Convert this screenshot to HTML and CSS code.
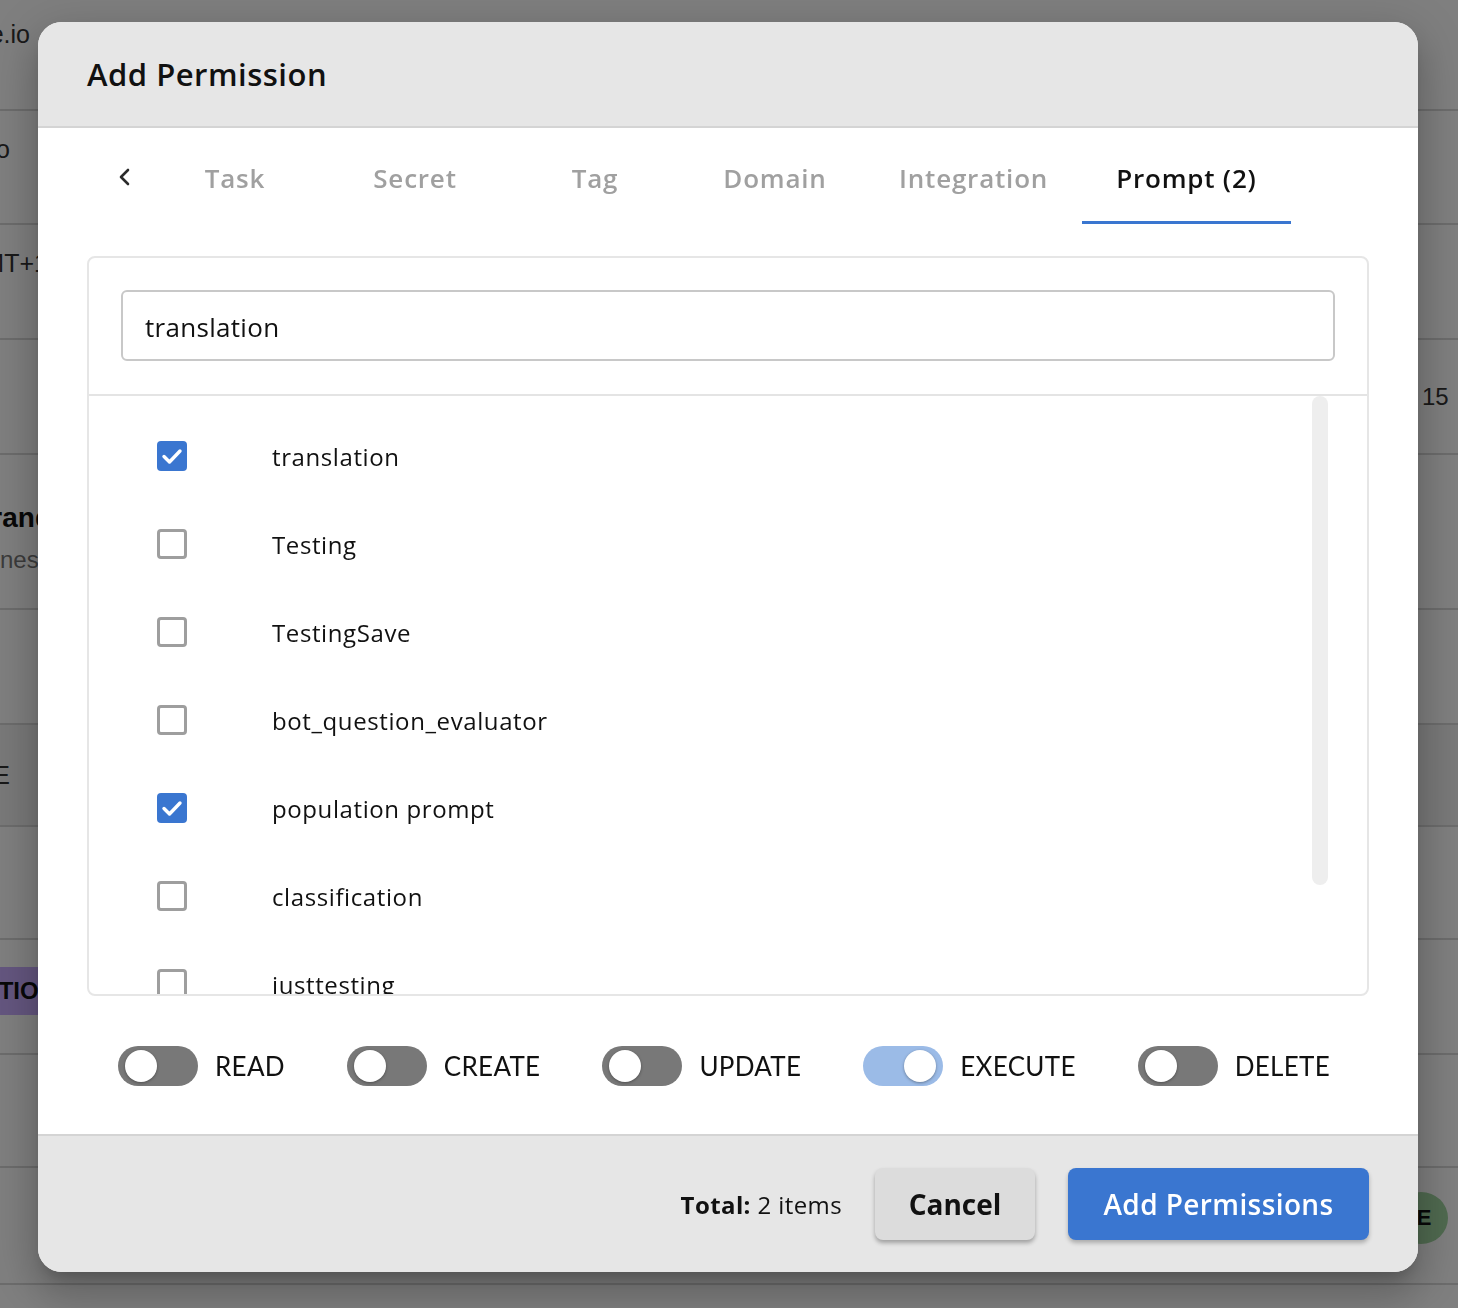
FILE: index.html
```html
<!DOCTYPE html>
<html lang="en">
<head>
<meta charset="utf-8">
<title>Add Permission</title>
<link rel="stylesheet" href="styles.css">
</head>
<body>
<div class="bg-page">
  <div class="bg-row r1"><div class="bg-left"><span class="bg-text">workspace.io</span></div></div>
  <div class="bg-row r2"><div class="bg-left narrow"><span class="bg-text">no</span></div></div>
  <div class="bg-row r3"><div class="bg-left wide"><span class="bg-text">GMT+11</span></div></div>
  <div class="bg-row r4"><div class="bg-right"><span class="bg-num">15</span></div></div>
  <div class="bg-row r5"><div class="bg-left wide2"><div class="bg-stack"><span class="bg-strong">Brand</span><span class="bg-muted">Chinese</span></div></div></div>
  <div class="bg-row r6"></div>
  <div class="bg-row r7 band"><div class="bg-left narrow"><span class="bg-text">TE</span></div></div>
  <div class="bg-row r8"></div>
  <div class="bg-row r9"><div class="bg-left wide"><span class="bg-chip">ACTION</span></div></div>
  <div class="bg-row r10"></div>
  <div class="bg-row r11"><div class="bg-right avatar-cell"><span class="bg-avatar">E</span></div></div>
  <div class="bg-row r12"></div>
</div>
<div class="overlay"></div>

<div class="modal">
  <div class="modal-header">
    <h2 class="modal-title">Add Permission</h2>
  </div>

  <div class="tabs">
    <button class="tab-back" aria-label="Back">
      <svg width="16" height="20" viewBox="0 0 16 20"><path d="M11 3 L4 10 L11 17" fill="none" stroke="#2b2b2b" stroke-width="2.6" stroke-linecap="round" stroke-linejoin="round"/></svg>
    </button>
    <div class="tab">Task</div>
    <div class="tab">Secret</div>
    <div class="tab">Tag</div>
    <div class="tab">Domain</div>
    <div class="tab">Integration</div>
    <div class="tab active">Prompt (2)</div>
  </div>

  <div class="modal-body">
    <div class="card">
      <div class="search-wrap">
        <div class="search-input">translation</div>
      </div>
      <div class="list">
        <div class="row"><span class="cb checked"><svg viewBox="0 0 30 30" width="30" height="30"><path d="M7 15.5 L12.5 21 L23 10" fill="none" stroke="#fff" stroke-width="3.4" stroke-linecap="round" stroke-linejoin="round"/></svg></span><span class="label">translation</span></div>
        <div class="row"><span class="cb"></span><span class="label">Testing</span></div>
        <div class="row"><span class="cb"></span><span class="label">TestingSave</span></div>
        <div class="row"><span class="cb"></span><span class="label">bot_question_evaluator</span></div>
        <div class="row"><span class="cb checked"><svg viewBox="0 0 30 30" width="30" height="30"><path d="M7 15.5 L12.5 21 L23 10" fill="none" stroke="#fff" stroke-width="3.4" stroke-linecap="round" stroke-linejoin="round"/></svg></span><span class="label">population prompt</span></div>
        <div class="row"><span class="cb"></span><span class="label">classification</span></div>
        <div class="row"><span class="cb"></span><span class="label">justtesting</span></div>
        <div class="scroll-thumb"></div>
      </div>
    </div>

    <div class="toggles">
      <div class="toggle-item"><span class="switch"><span class="knob"></span></span><span class="toggle-label">READ</span></div>
      <div class="toggle-item"><span class="switch"><span class="knob"></span></span><span class="toggle-label">CREATE</span></div>
      <div class="toggle-item"><span class="switch"><span class="knob"></span></span><span class="toggle-label">UPDATE</span></div>
      <div class="toggle-item"><span class="switch on"><span class="knob"></span></span><span class="toggle-label">EXECUTE</span></div>
      <div class="toggle-item"><span class="switch"><span class="knob"></span></span><span class="toggle-label">DELETE</span></div>
    </div>
  </div>

  <div class="modal-footer">
    <div class="total"><b>Total:</b> 2 items</div>
    <button class="btn btn-cancel">Cancel</button>
    <button class="btn btn-primary">Add Permissions</button>
  </div>
</div>
</body>
</html>
```

FILE: styles.css
```css
* { box-sizing: border-box; }
html, body { margin: 0; padding: 0; }
body {
  width: 1458px;
  height: 1308px;
  overflow: hidden;
  position: relative;
  font-family: "Open Sans", "Noto Sans", sans-serif;
  background: #ffffff;
  color: #111;
}

/* background page */
.bg-page {
  display: flex;
  flex-direction: column;
  height: 1308px;
  overflow: hidden;
  font-family: "Liberation Sans", Arial, sans-serif;
}
.bg-row {
  flex: none;
  border-bottom: 2px solid #d8d8d8;
  display: flex;
  align-items: center;
  justify-content: space-between;
}
.r1 { height: 111px; align-items: flex-start; padding-top: 20px; }
.r2 { height: 114px; align-items: flex-start; padding-top: 24px; }
.r3 { height: 115px; align-items: flex-start; padding-top: 24px; }
.r4 { height: 115px; }
.r5 { height: 155px; padding-top: 14px; }
.r6 { height: 115px; }
.r7 { height: 102px; background: #f2f2f2; }
.r8 { height: 113px; }
.r9 { height: 115px; padding-bottom: 12px; }
.r10 { height: 113px; }
.r11 { height: 117px; padding-bottom: 16px; }
.r12 { height: 120px; }
.bg-left {
  width: 30px;
  display: flex;
  justify-content: flex-end;
  white-space: nowrap;
}
.bg-left.narrow { width: 10px; }
.bg-left.wide { width: 60px; }
.bg-left.wide2 { width: 52px; }
.bg-right { margin-left: auto; width: 36px; white-space: nowrap; }
.bg-text { font-size: 25px; color: #333; }
.bg-num { font-size: 24px; color: #333; }
.bg-stack { display: flex; flex-direction: column; align-items: flex-end; line-height: 42px; }
.bg-strong { font-size: 28px; color: #111; font-weight: 600; }
.bg-muted { font-size: 24px; color: #777; }
.bg-chip {
  background: #c9adff;
  color: #111;
  font-size: 24px;
  font-weight: 700;
  padding: 10px 4px;
}
.avatar-cell { width: auto; padding-right: 10px; }
.bg-avatar {
  display: inline-flex;
  align-items: center;
  justify-content: center;
  width: 54px;
  height: 52px;
  border-radius: 50%;
  background: #a0d4a0;
  font-size: 22px;
  font-weight: 700;
  color: #111;
  padding-left: 6px;
}

.overlay {
  position: fixed;
  inset: 0;
  background: rgba(0, 0, 0, 0.5);
}

/* modal */
.modal {
  position: absolute;
  left: 38px;
  top: 22px;
  width: 1380px;
  height: 1250px;
  background: #fff;
  border-radius: 24px;
  overflow: hidden;
  display: flex;
  flex-direction: column;
  box-shadow: 0 11px 15px -7px rgba(0,0,0,0.2), 0 24px 38px 3px rgba(0,0,0,0.14), 0 9px 46px 8px rgba(0,0,0,0.12);
}
.modal-header {
  height: 106px;
  flex: none;
  background: #e6e6e6;
  border-bottom: 2px solid #d4d4d4;
  display: flex;
  align-items: center;
  padding-left: 49px;
}
.modal-title {
  margin: 0;
  font-size: 31px;
  font-weight: 600;
  letter-spacing: 0.5px;
  color: #111;
}

.tabs {
  height: 96px;
  flex: none;
  display: flex;
  align-items: stretch;
  padding-left: 57px;
}
.tab-back {
  width: 50px;
  border: none;
  background: none;
  padding: 2px 0 0 10px;
  display: flex;
  align-items: center;
  justify-content: center;
}
.tab {
  min-width: 180px;
  padding: 7px 34px 0;
  display: flex;
  align-items: center;
  justify-content: center;
  font-size: 26px;
  font-weight: 600;
  letter-spacing: 0.8px;
  color: #a0a0a0;
  border-bottom: 3px solid transparent;
  white-space: nowrap;
}
.tab.active {
  color: #111;
  border-bottom-color: #3a76d0;
}

.modal-body {
  flex: 1;
  padding: 32px 49px 0;
  display: flex;
  flex-direction: column;
}
.card {
  height: 740px;
  border: 2px solid #e6e6e6;
  border-radius: 8px;
  display: flex;
  flex-direction: column;
  overflow: hidden;
}
.search-wrap {
  padding: 32px 32px 33px;
  border-bottom: 2px solid #e4e4e4;
  flex: none;
}
.search-input {
  height: 71px;
  border: 2px solid #c8c8c8;
  border-radius: 6px;
  display: flex;
  align-items: center;
  padding: 2px 0 0 22px;
  font-size: 26px;
  letter-spacing: 0.3px;
  color: #111;
}
.list {
  flex: 1;
  overflow: hidden;
  position: relative;
  padding-top: 16px;
}
.row {
  height: 88px;
  display: flex;
  align-items: center;
  padding-left: 68px;
}
.cb {
  width: 30px;
  height: 30px;
  border: 3px solid #9e9e9e;
  border-radius: 4px;
  flex: none;
  display: flex;
}
.cb.checked {
  border: none;
  background: #3a76d0;
}
.label {
  margin-left: 85px;
  font-size: 24px;
  letter-spacing: 0.6px;
  color: #111;
}
.scroll-thumb {
  position: absolute;
  top: 0;
  right: 39px;
  width: 16px;
  height: 489px;
  border-radius: 8px;
  background: #eeeeee;
}

.toggles {
  display: flex;
  justify-content: space-between;
  align-items: center;
  padding: 50px 39px 0 31px;
}
.toggle-item {
  display: flex;
  align-items: center;
  gap: 17px;
}
.switch {
  width: 80px;
  height: 40px;
  border-radius: 20px;
  background: #787878;
  position: relative;
  flex: none;
}
.switch .knob {
  position: absolute;
  top: 4px;
  left: 7px;
  width: 32px;
  height: 32px;
  border-radius: 50%;
  background: #fff;
  box-shadow: 0 1px 3px rgba(0,0,0,0.35);
}
.switch.on { background: #9bbbe7; }
.switch.on .knob { left: auto; right: 7px; }
.toggle-label {
  font-family: "Lato", "Open Sans", sans-serif;
  font-size: 26px;
  color: #111;
  letter-spacing: 0.3px;
}

.modal-footer {
  height: 138px;
  flex: none;
  margin-top: auto;
  background: #e6e6e6;
  border-top: 2px solid #d4d4d4;
  display: flex;
  align-items: center;
  justify-content: flex-end;
  padding-right: 49px;
}
.total {
  font-size: 24px;
  letter-spacing: 0.4px;
  color: #111;
  margin-right: 33px;
}
.total b { font-weight: 700; }
.btn {
  height: 72px;
  border: none;
  border-radius: 8px;
  font-family: "Open Sans", "Noto Sans", sans-serif;
  font-size: 28px;
  cursor: pointer;
}
.btn-cancel {
  width: 160px;
  background: #dcdcdc;
  color: #111;
  font-weight: 700;
  box-shadow: 0 3px 4px rgba(0,0,0,0.3);
  margin-right: 33px;
}
.btn-primary {
  width: 301px;
  background: #3a76d0;
  color: #fff;
  font-weight: 600;
  letter-spacing: 0.4px;
  box-shadow: 0 3px 4px rgba(0,0,0,0.25);
}
```
